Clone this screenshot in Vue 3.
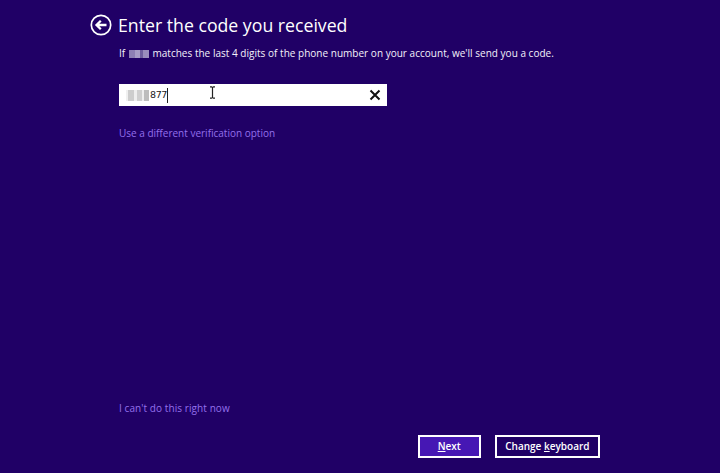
<script setup>
const blocks = [
  { w: 6, c: '#8d7fb4' }, { w: 5, c: '#a79cc6' }, { w: 3, c: '#6f5f9f' }, { w: 6, c: '#9a8dbd' }
]
const inputBlocks = [
  { w: 2, c: '#f0f0f0' }, { w: 6, c: '#cdcdcd' }, { w: 3, c: '#eeeeee' }, { w: 5, c: '#cfcfcf' }, { w: 2, c: '#efefef' }, { w: 5, c: '#bdbdbd' }
]
</script>

<template>
  <main class="page">
    <header class="head">
      <svg class="back" width="22" height="22" viewBox="0 0 22 22" aria-hidden="true">
        <circle cx="11" cy="11" r="9.7" fill="none" stroke="#fff" stroke-width="1.7" />
        <path d="M16.5 11H7M10.8 6.8 6.5 11l4.3 4.2" fill="none" stroke="#fff" stroke-width="2.3" />
      </svg>
      <h1>Enter the code you received</h1>
    </header>

    <p class="intro">
      If
      <span class="mask"><i v-for="(b, i) in blocks" :key="i" :style="{ width: b.w + 'px', background: b.c }"></i></span>
      matches the last 4 digits of the phone number on your account, we'll send you a code.
    </p>

    <div class="field">
      <span class="mask input-mask"><i v-for="(b, i) in inputBlocks" :key="i" :style="{ width: b.w + 'px', background: b.c }"></i></span>
      <span class="digits">877</span>
      <span class="caret"></span>
      <svg class="clear" width="12" height="12" viewBox="0 0 12 12" aria-hidden="true">
        <path d="M1.5 1.5l9 9M10.5 1.5l-9 9" stroke="#111" stroke-width="2" />
      </svg>
      <svg class="ibeam" width="7" height="13" viewBox="0 0 7 13" aria-hidden="true">
        <path d="M1 .8h1.6L3.5 1.6 4.4.8H6M3.5 1.6v9.8M1 12.2h1.6l.9-.8.9.8H6" fill="none" stroke="#222" stroke-width="1.2" />
      </svg>
    </div>

    <a class="link option">Use a different verification option</a>

    <a class="link later">I can't do this right now</a>

    <footer class="actions">
      <button class="btn primary"><u>N</u>ext</button>
      <button class="btn">Change <u>k</u>eyboard</button>
    </footer>
  </main>
</template>

<style>
html, body { margin: 0; background: #200066; }
</style>

<style scoped>
.page {
  box-sizing: border-box;
  width: 720px;
  height: 473px;
  padding: 14px 120px 15px 119px;
  display: flex;
  flex-direction: column;
  background: #200066;
  color: #fff;
  font-family: "Open Sans", "Noto Sans", sans-serif;
  overflow: hidden;
}
.head {
  display: flex;
  align-items: center;
  gap: 6px;
  margin-left: -29px;
  height: 22px;
}
.back { flex: none; }
h1 {
  margin: 0;
  font-size: 17.7px;
  font-weight: 400;
  line-height: 22px;
  white-space: nowrap;
}
.intro {
  margin: 9px 0 0;
  height: 16px;
  font-size: 10px;
  letter-spacing: 0.02px;
  line-height: 16px;
  white-space: nowrap;
  color: #f4f2fa;
}
.mask {
  display: inline-flex;
  vertical-align: -1px;
  height: 8px;
  margin: 0 1px;
  filter: blur(0.7px);
}
.mask i { display: block; height: 100%; }
.field {
  position: relative;
  box-sizing: border-box;
  display: flex;
  align-items: center;
  width: 268px;
  height: 22px;
  margin-top: 23px;
  padding-left: 7px;
  background: #fff;
  color: #222;
  font-family: "DejaVu Sans", sans-serif;
  font-size: 9.5px;
}
.input-mask { height: 11px; margin: 0 1px 0 0; }
.digits { letter-spacing: -0.4px; line-height: 22px; }
.caret { width: 1px; height: 15px; background: #222; margin-left: 0; }
.clear { position: absolute; right: 6px; top: 5px; }
.ibeam { position: absolute; left: 90px; top: 2px; }
.link {
  font-size: 10px;
  line-height: 16px;
  color: #9470ec;
  white-space: nowrap;
}
.option { margin-top: 19px; }
.later { margin-top: auto; letter-spacing: 0.08px; }
.actions {
  display: flex;
  justify-content: flex-end;
  gap: 14px;
  margin-top: 19px;
}
.btn {
  box-sizing: border-box;
  height: 23px;
  padding: 0 8.5px;
  border: 2px solid #fff;
  background: #200066;
  color: #fff;
  font-family: inherit;
  font-size: 10px;
  font-weight: 600;
  line-height: 19px;
  white-space: nowrap;
}
.primary { width: 63px; background: #4617b4; }
</style>
